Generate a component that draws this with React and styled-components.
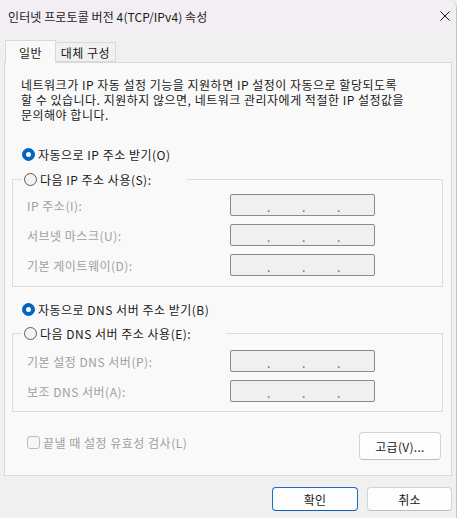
import React from "react";
import styled, { createGlobalStyle } from "styled-components";

const GlobalStyle = createGlobalStyle`
  * {
    box-sizing: border-box;
  }
  html,
  body {
    margin: 0;
    padding: 0;
    background: #f0f0f0;
  }
  body {
    font-family: "Noto Sans CJK KR", "Liberation Sans", sans-serif;
    font-size: 12px;
    color: #1a1a1a;
  }
`;

const Window = styled.div`
  width: 457px;
  height: 518px;
  display: flex;
  flex-direction: column;
  background: #f0f0f0;
  border-right: 1px solid #c4c4c4;
  border-top-right-radius: 8px;
  overflow: hidden;
`;

const TitleBar = styled.div`
  height: 32px;
  flex: none;
  display: flex;
  align-items: center;
  justify-content: space-between;
  padding: 0 6px 0 8px;
  background: #f3eef4;
  font-size: 12px;
  line-height: 15px;
  letter-spacing: 0.1px;
  color: #1b1b1b;
`;

const CloseIcon = styled.svg`
  width: 10px;
  height: 10px;
  display: block;
`;

const Body = styled.div`
  padding: 8px 4px 0 4px;
  display: flex;
  flex-direction: column;
`;

const TabRow = styled.div`
  height: 22px;
  display: flex;
  align-items: flex-end;
  padding-left: 1px;
`;

const Tab = styled.div`
  position: relative;
  z-index: ${(p) => (p.$active ? 1 : 0)};
  width: ${(p) => p.$w}px;
  height: ${(p) => (p.$active ? 23 : 20)}px;
  margin-bottom: ${(p) => (p.$active ? -1 : 0)}px;
  margin-left: ${(p) => (p.$active ? 0 : -1)}px;
  display: flex;
  align-items: center;
  justify-content: center;
  background: ${(p) => (p.$active ? "#f9f9f9" : "#f0f0f0")};
  border: 1px solid #d9d9d9;
  border-bottom: ${(p) => (p.$active ? "none" : "1px solid #d9d9d9")};
  line-height: 15px;
  letter-spacing: 0.5px;
  color: #1a1a1a;
`;

const Panel = styled.div`
  height: 414px;
  background: #f9f9f9;
  border: 1px solid #d9d9d9;
  display: flex;
  flex-direction: column;
  letter-spacing: 0.5px;
`;

const Desc = styled.div`
  margin: 14px 0 0 16px;
  color: #1a1a1a;
`;

const DescLine = styled.div`
  height: 15px;
  line-height: 15px;
  white-space: nowrap;
`;

const RadioRow = styled.label`
  display: flex;
  align-items: center;
  gap: 3px;
  height: 15px;
  line-height: 15px;
  margin: ${(p) => p.$m || "0"};
  color: #1a1a1a;
  white-space: nowrap;
`;

const RadioDot = styled.span`
  width: 13px;
  height: 13px;
  flex: none;
  border-radius: 50%;
  display: flex;
  align-items: center;
  justify-content: center;
  background: ${(p) => (p.$on ? "#0067c0" : "#f4f4f4")};
  border: 1px solid ${(p) => (p.$on ? "#0067c0" : "#5c5c5c")};

  &::after {
    content: "";
    display: ${(p) => (p.$on ? "block" : "none")};
    width: 5px;
    height: 5px;
    border-radius: 50%;
    background: #ffffff;
  }
`;

const Group = styled.fieldset`
  margin: ${(p) => p.$top}px 8px 0 7px;
  padding: 0 0 ${(p) => p.$pb}px 14px;
  min-width: 0;
  border: 1px solid #dcdcdc;

  legend {
    margin-left: -5px;
    padding: 0 35px 0 2px;
  }
`;

const Fields = styled.div`
  display: grid;
  grid-template-columns: 203px 145px;
  row-gap: 8px;
  padding-top: ${(p) => p.$pt}px;
  align-items: center;
`;

const FieldLabel = styled.span`
  color: #a0a0a0;
  line-height: 15px;
  white-space: nowrap;
`;

const IpBox = styled.div`
  height: 22px;
  display: flex;
  align-items: center;
  gap: 32px;
  padding-left: 36px;
  background: #f0f0f0;
  border: 1px solid #8a8a8a;
  border-radius: 2px;
  color: #6d6d6d;
  line-height: 15px;
  letter-spacing: 0;

  span {
    width: 3px;
    margin-top: 2px;
  }
`;

const BottomRow = styled.div`
  display: flex;
  justify-content: space-between;
  align-items: flex-start;
  margin: 20px 10px 0 22px;
`;

const CheckRow = styled.label`
  display: flex;
  align-items: center;
  gap: 3px;
  margin-top: 3px;
  line-height: 15px;
  color: #a0a0a0;
`;

const CheckBox = styled.span`
  width: 13px;
  height: 13px;
  border: 1px solid #bcbcbc;
  border-radius: 3px;
  background: #f6f6f6;
`;

const Button = styled.button`
  width: ${(p) => p.$w}px;
  height: ${(p) => p.$h}px;
  padding: 0;
  font: inherit;
  line-height: 15px;
  letter-spacing: 0.3px;
  color: #1a1a1a;
  background: #fdfdfd;
  border: 1px solid ${(p) => (p.$primary ? "#1b6ec2" : "#d3d3d3")};
  border-bottom-color: ${(p) => (p.$primary ? "#0e5fb0" : "#bdbdbd")};
  border-radius: 4px;
`;

const Footer = styled.div`
  display: flex;
  justify-content: flex-end;
  gap: 9px;
  padding: 11px 0 0 0;
`;

const Radio = ({ on, children, m }) => (
  <RadioRow $m={m}>
    <RadioDot $on={on} />
    {children}
  </RadioRow>
);

const IpField = () => (
  <IpBox>
    <span>.</span>
    <span>.</span>
    <span>.</span>
  </IpBox>
);

export default function App() {
  return (
    <>
      <GlobalStyle />
      <Window>
        <TitleBar>
          <span>인터넷 프로토콜 버전 4(TCP/IPv4) 속성</span>
          <CloseIcon viewBox="0 0 10 10">
            <path d="M0.5 0.5 L9.5 9.5 M9.5 0.5 L0.5 9.5" stroke="#1a1a1a" strokeWidth="1" fill="none" />
          </CloseIcon>
        </TitleBar>
        <Body>
          <TabRow>
            <Tab $active $w={51}>일반</Tab>
            <Tab $w={61}>대체 구성</Tab>
          </TabRow>
          <Panel>
            <Desc>
              <DescLine>네트워크가 IP 자동 설정 기능을 지원하면 IP 설정이 자동으로 할당되도록</DescLine>
              <DescLine>할 수 있습니다. 지원하지 않으면, 네트워크 관리자에게 적절한 IP 설정값을</DescLine>
              <DescLine>문의해야 합니다.</DescLine>
            </Desc>
            <Radio on m="25px 0 0 17px">자동으로 IP 주소 받기(O)</Radio>
            <Group $top={10} $pb={10}>
              <legend>
                <Radio>다음 IP 주소 사용(S):</Radio>
              </legend>
              <Fields $pt={7}>
                <FieldLabel>IP 주소(I):</FieldLabel>
                <IpField />
                <FieldLabel>서브넷 마스크(U):</FieldLabel>
                <IpField />
                <FieldLabel>기본 게이트웨이(D):</FieldLabel>
                <IpField />
              </Fields>
            </Group>
            <Radio on m="15px 0 0 17px">자동으로 DNS 서버 주소 받기(B)</Radio>
            <Group $top={9} $pb={9}>
              <legend>
                <Radio>다음 DNS 서버 주소 사용(E):</Radio>
              </legend>
              <Fields $pt={9}>
                <FieldLabel>기본 설정 DNS 서버(P):</FieldLabel>
                <IpField />
                <FieldLabel>보조 DNS 서버(A):</FieldLabel>
                <IpField />
              </Fields>
            </Group>
            <BottomRow>
              <CheckRow>
                <CheckBox />
                끝낼 때 설정 유효성 검사(L)
              </CheckRow>
              <Button $w={82} $h={28}>고급(V)...</Button>
            </BottomRow>
          </Panel>
          <Footer>
            <Button $primary $w={86} $h={24}>확인</Button>
            <Button $w={85} $h={24}>취소</Button>
          </Footer>
        </Body>
      </Window>
    </>
  );
}
